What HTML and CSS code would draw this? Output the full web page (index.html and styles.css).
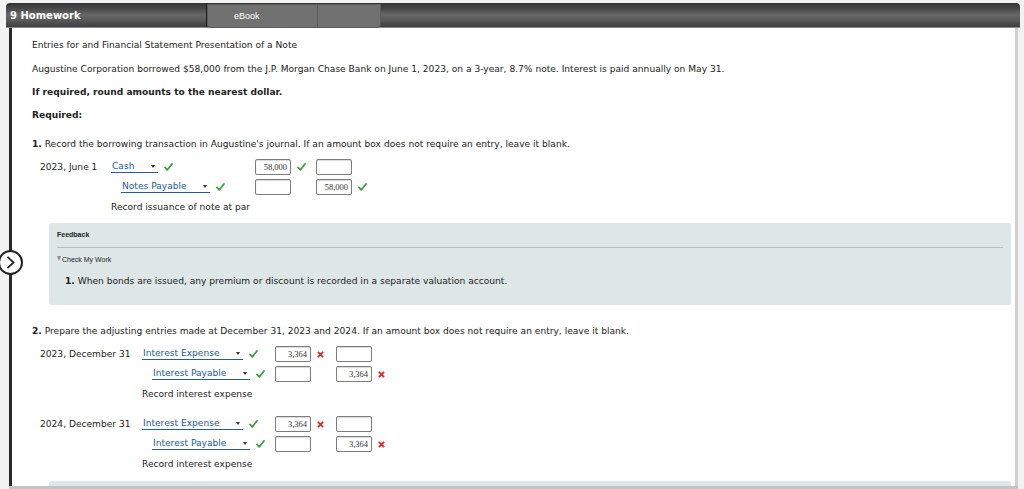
FILE: index.html
```html
<!DOCTYPE html>
<html>
<head>
<meta charset="utf-8">
<link rel="stylesheet" href="styles.css">
</head>
<body>
<div class="app">
  <div class="topbar">
    <div class="title">9 Homework</div>
    <div class="tab">
      <div class="tab-seg tab-main">eBook</div>
      <div class="tab-seg tab-side"></div>
    </div>
  </div>
  <div class="frame">
    <div class="content">
      <p class="t">Entries for and Financial Statement Presentation of a Note</p>
      <p class="t m14">Augustine Corporation borrowed $58,000 from the J.P. Morgan Chase Bank on June 1, 2023, on a 3-year, 8.7% note. Interest is paid annually on May 31.</p>
      <p class="t b m13">If required, round amounts to the nearest dollar.</p>
      <p class="t b m13">Required:</p>
      <p class="t m19"><b>1.</b> Record the borrowing transaction in Augustine's journal. If an amount box does not require an entry, leave it blank.</p>

      <div class="journal j1 m10">
        <div class="cell date">2023, June 1</div>
        <div class="cell acct"><span class="sel w47">Cash<i class="arr"></i></span><svg class="ok" viewBox="0 0 10 9"><path d="M1 5 L3.6 7.8 L9 1"/></svg></div>
        <div class="cell amt"><span class="box">58,000</span><svg class="ok" viewBox="0 0 10 9"><path d="M1 5 L3.6 7.8 L9 1"/></svg></div>
        <div class="cell amt"><span class="box"></span></div>

        <div class="cell date"></div>
        <div class="cell acct ind"><span class="sel w89">Notes Payable<i class="arr"></i></span><svg class="ok" viewBox="0 0 10 9"><path d="M1 5 L3.6 7.8 L9 1"/></svg></div>
        <div class="cell amt"><span class="box"></span></div>
        <div class="cell amt"><span class="box">58,000</span><svg class="ok" viewBox="0 0 10 9"><path d="M1 5 L3.6 7.8 L9 1"/></svg></div>
      </div>
      <p class="t memo1 m7">Record issuance of note at par</p>

      <div class="feedback m11">
        <div class="fb-title">Feedback</div>
        <div class="fb-rule"></div>
        <div class="fb-check"><span class="tri"></span>Check My Work</div>
        <p class="t fb-text"><b>1.</b> When bonds are issued, any premium or discount is recorded in a separate valuation account.</p>
      </div>

      <p class="t m21"><b>2.</b> Prepare the adjusting entries made at December 31, 2023 and 2024. If an amount box does not require an entry, leave it blank.</p>

      <div class="journal j2 m10">
        <div class="cell date">2023, December 31</div>
        <div class="cell acct"><span class="sel w101">Interest Expense<i class="arr"></i></span><svg class="ok" viewBox="0 0 10 9"><path d="M1 5 L3.6 7.8 L9 1"/></svg></div>
        <div class="cell amt"><span class="box">3,364</span><svg class="bad" viewBox="0 0 8 8"><path d="M1 1 L7 7 M7 1 L1 7"/></svg></div>
        <div class="cell amt"><span class="box"></span></div>

        <div class="cell date"></div>
        <div class="cell acct ind"><span class="sel w98">Interest Payable<i class="arr"></i></span><svg class="ok" viewBox="0 0 10 9"><path d="M1 5 L3.6 7.8 L9 1"/></svg></div>
        <div class="cell amt"><span class="box"></span></div>
        <div class="cell amt"><span class="box">3,364</span><svg class="bad" viewBox="0 0 8 8"><path d="M1 1 L7 7 M7 1 L1 7"/></svg></div>
      </div>
      <p class="t memo2 m7">Record interest expense</p>

      <div class="journal j2 m17">
        <div class="cell date">2024, December 31</div>
        <div class="cell acct"><span class="sel w101">Interest Expense<i class="arr"></i></span><svg class="ok" viewBox="0 0 10 9"><path d="M1 5 L3.6 7.8 L9 1"/></svg></div>
        <div class="cell amt"><span class="box">3,364</span><svg class="bad" viewBox="0 0 8 8"><path d="M1 1 L7 7 M7 1 L1 7"/></svg></div>
        <div class="cell amt"><span class="box"></span></div>

        <div class="cell date"></div>
        <div class="cell acct ind"><span class="sel w98">Interest Payable<i class="arr"></i></span><svg class="ok" viewBox="0 0 10 9"><path d="M1 5 L3.6 7.8 L9 1"/></svg></div>
        <div class="cell amt"><span class="box"></span></div>
        <div class="cell amt"><span class="box">3,364</span><svg class="bad" viewBox="0 0 8 8"><path d="M1 1 L7 7 M7 1 L1 7"/></svg></div>
      </div>
      <p class="t memo2 m7">Record interest expense</p>

      <div class="feedback next m12"></div>
    </div>
  </div>
  <div class="bottombar"></div>
  <div class="toggle"><svg viewBox="0 0 24 24"><path d="M8.5 5.5 L15.5 12 L8.5 18.5"/></svg></div>
</div>
</body>
</html>
```

FILE: styles.css
```css
* { box-sizing: border-box; }
html, body { margin: 0; padding: 0; }
body {
  background: #f2f2f2;
  font-family: "DejaVu Sans", Verdana, sans-serif;
  color: #222;
}
.app {
  position: relative;
  width: 1024px;
  height: 489px;
  overflow: hidden;
  display: flex;
  flex-direction: column;
}
.topbar {
  flex: 0 0 auto;
  margin: 3px 4px 0 6px;
  height: 25px;
  border-radius: 4px 4px 0 0;
  background: linear-gradient(#333 0%, #4a4a4a 25%, #686868 50%, #5a5a5a 70%, #3e3e3e 100%);
  border-bottom: 1px solid #8a8a8a;
  display: flex;
  align-items: stretch;
}
.title {
  width: 201px;
  padding-left: 4px;
  color: #fff;
  font-weight: bold;
  font-size: 10px;
  line-height: 25px;
  border-right: 1px solid #1e1e1e;
}
.tab {
  display: flex;
  margin-top: 1px;
  height: 24px;
  background: #717171;
  border: 1px solid #5c5c5c;
  border-radius: 0 0 4px 4px;
}
.tab-seg { height: 100%; }
.tab-main {
  width: 110px;
  padding-left: 26px;
  color: #fff;
  font-family: "Liberation Sans", Arial, sans-serif;
  font-size: 9px;
  line-height: 22px;
  border-right: 1px solid #5a5a5a;
}
.tab-side { width: 62px; }

.frame {
  flex: 1 1 auto;
  margin: 0 6px 0 9px;
  border-left: 3px solid #2a2a2a;
  border-right: 3px solid #d0d0d0;
  background: #fff;
}
.content {
  padding: 12px 4px 0 20px;
}
.t {
  margin: 0;
  font-size: 9.1px;
  line-height: 10px;
  white-space: nowrap;
}
.b { font-weight: bold; }
.m7 { margin-top: 7px; }
.m10 { margin-top: 10px; }
.m11 { margin-top: 11px; }
.m12 { margin-top: 12px; }
.m13 { margin-top: 13px; }
.m14 { margin-top: 14px; }
.m17 { margin-top: 17px; }
.m19 { margin-top: 19px; }
.m21 { margin-top: 21px; }

.journal {
  display: grid;
  row-gap: 4px;
  padding-left: 8px;
  grid-auto-rows: 16px;
}
.j1 { grid-template-columns: 71px 144px 61px 80px; }
.j2 { grid-template-columns: 102px 133px 61px 80px; }
.cell {
  display: flex;
  align-items: center;
  font-size: 9.1px;
  white-space: nowrap;
}
.acct { gap: 6px; }
.acct.ind { padding-left: 10px; }
.amt { gap: 6px; }
.sel {
  position: relative;
  display: inline-block;
  height: 12px;
  line-height: 11px;
  padding-left: 1px;
  color: #235d9c;
  font-size: 9.1px;
  border-bottom: 1px solid #235d9c;
}
.w47 { width: 47px; }
.w89 { width: 89px; }
.w101 { width: 101px; }
.w98 { width: 98px; }
.arr {
  position: absolute;
  right: 3px;
  top: 4px;
  width: 0;
  height: 0;
  border-left: 2.5px solid transparent;
  border-right: 2.5px solid transparent;
  border-top: 3px solid #333;
}
.ok {
  width: 9px;
  height: 8px;
  fill: none;
  stroke: #3d9f3d;
  stroke-width: 1.9;
  stroke-linecap: round;
  stroke-linejoin: round;
}
.bad {
  width: 7px;
  height: 7px;
  fill: none;
  stroke: #e4231c;
  stroke-width: 2;
}
.box {
  display: inline-block;
  width: 36px;
  height: 16px;
  border: 1px solid #7d7d7d;
  border-radius: 2px;
  box-shadow: inset 0 1px 1px rgba(0,0,0,0.15);
  background: #fff;
  font-family: "Liberation Serif", "Times New Roman", serif;
  font-size: 8.5px;
  line-height: 14px;
  text-align: right;
  padding-right: 3px;
  color: #333;
}
.memo1 { padding-left: 79px; }
.memo2 { padding-left: 110px; }

.feedback {
  margin-left: 17px;
  background: #dee6e8;
  border-radius: 3px;
  padding: 7px 8px 19px 8px;
}
.fb-title {
  font-family: "Liberation Sans", Arial, sans-serif;
  font-size: 7px;
  font-weight: bold;
  line-height: 10px;
  color: #222;
}
.fb-rule {
  margin-top: 7px;
  border-top: 1px solid #b9bfc1;
}
.fb-check {
  margin-top: 7px;
  font-family: "Liberation Sans", Arial, sans-serif;
  font-size: 7px;
  line-height: 10px;
  color: #222;
}
.tri {
  display: inline-block;
  width: 0;
  height: 0;
  border-left: 2.5px solid transparent;
  border-right: 2.5px solid transparent;
  border-top: 5px solid #8f8f8f;
  margin-right: 1px;
  vertical-align: 1px;
}
.fb-text {
  margin-top: 11px;
  padding-left: 8px;
}
.feedback.next {
  height: 20px;
  padding: 0;
}
.bottombar {
  position: absolute;
  left: 9px;
  right: 6px;
  bottom: 0;
  height: 3px;
  background: #c4c4c4;
}
.toggle {
  position: absolute;
  left: -2px;
  top: 250px;
  width: 25px;
  height: 25px;
  border: 2px solid #222;
  border-radius: 50%;
  background: #fff;
}
.toggle svg {
  display: block;
  width: 21px;
  height: 21px;
  fill: none;
  stroke: #222;
  stroke-width: 2;
  stroke-linejoin: miter;
}
```
